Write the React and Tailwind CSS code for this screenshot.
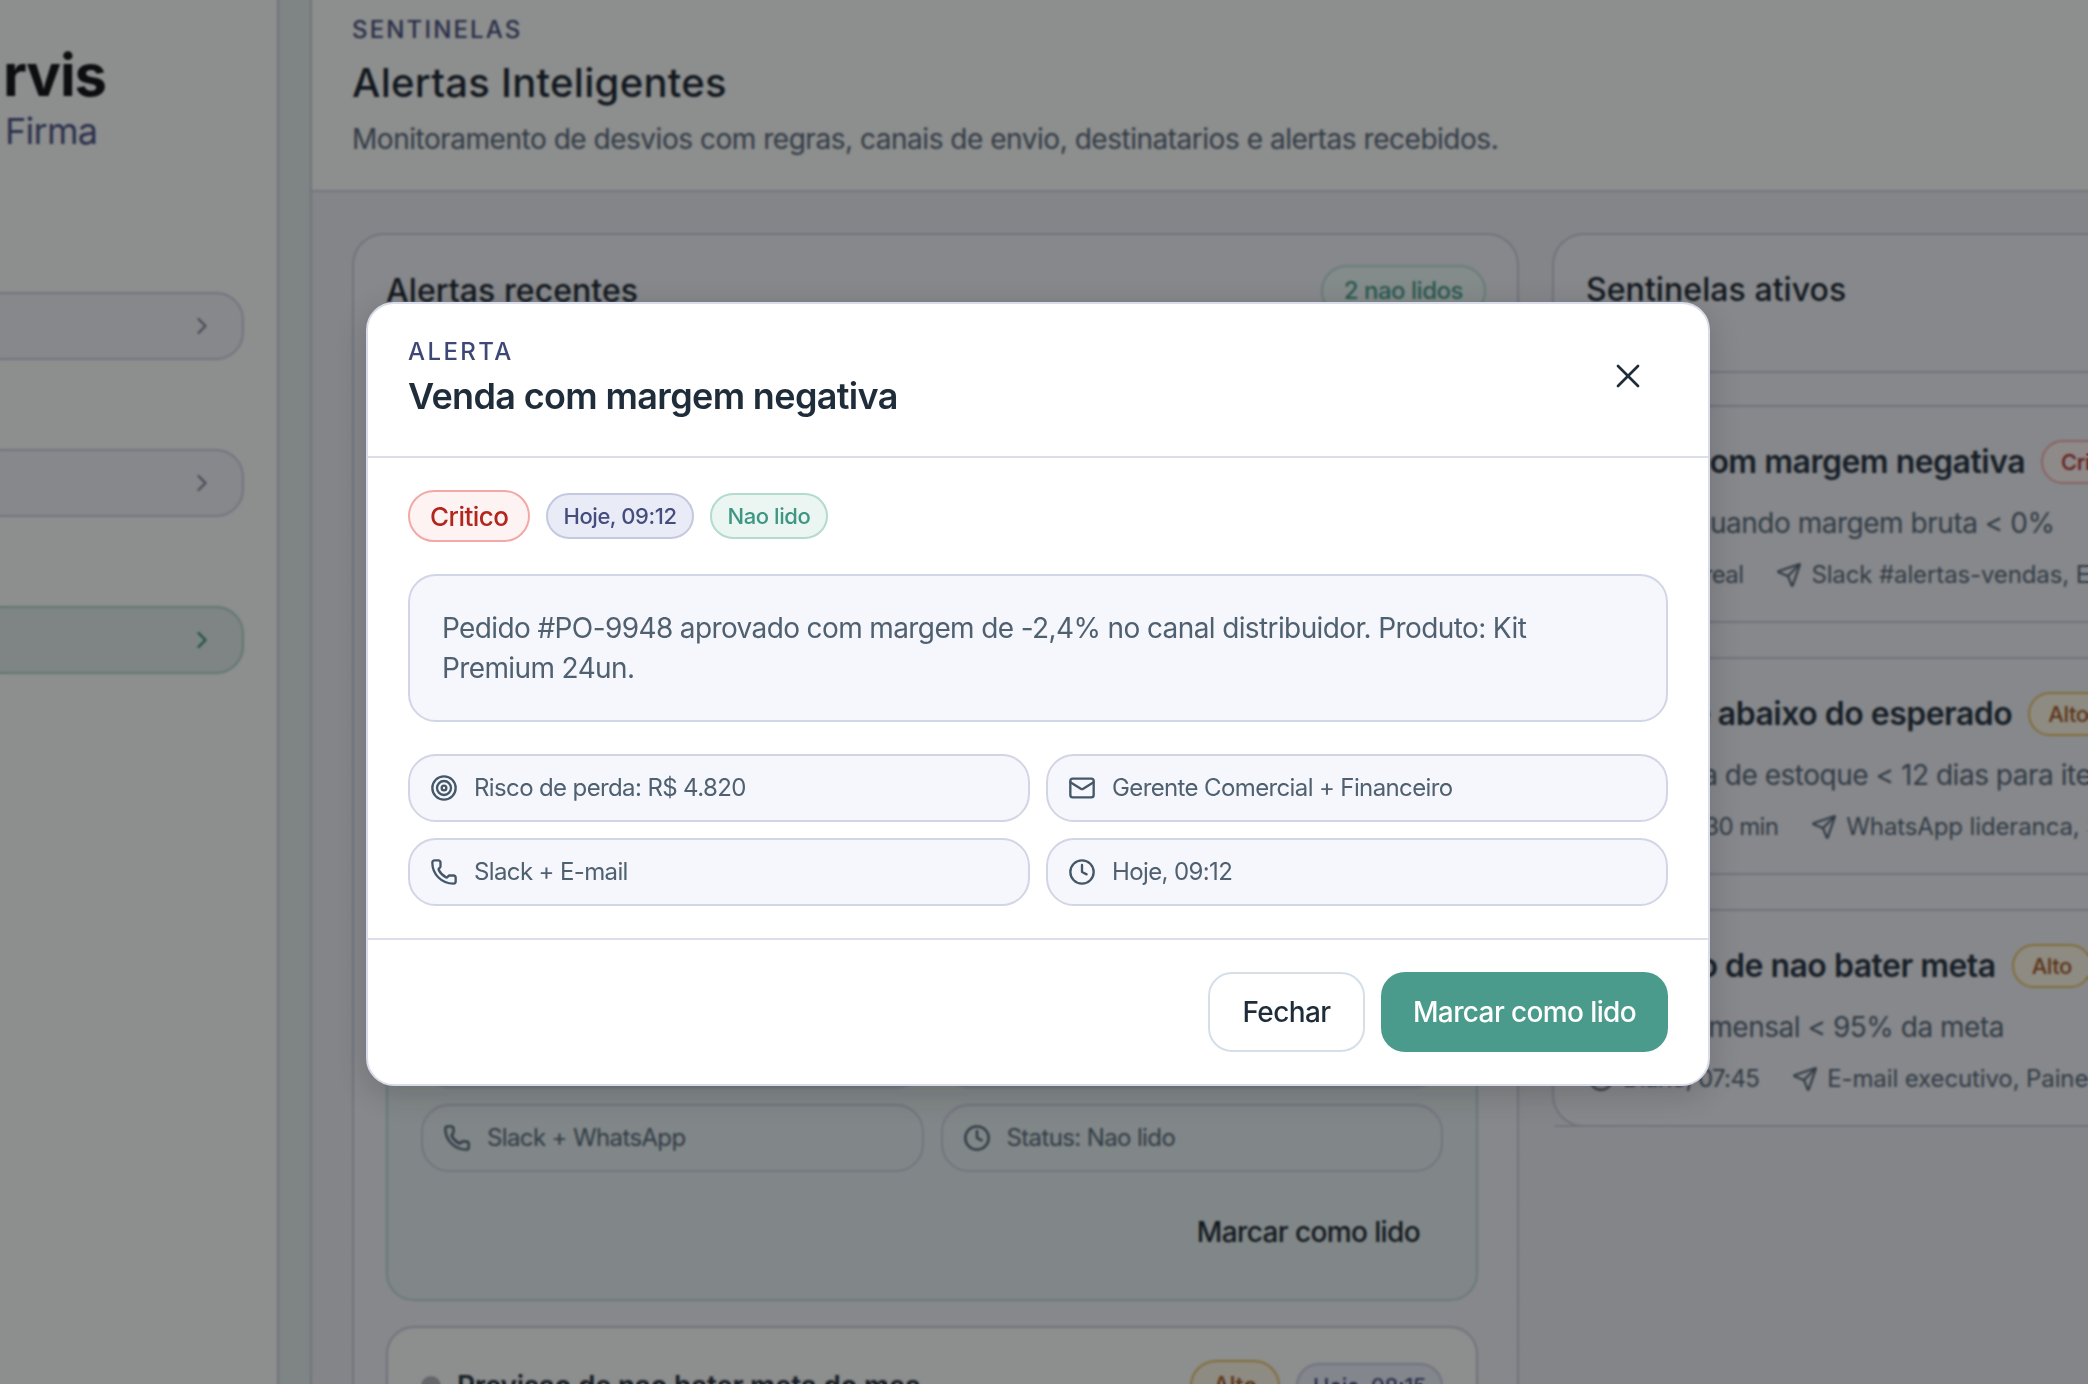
import React from "react";
import { ChevronRight, Target, Mail, Phone, Clock, Send, X } from "lucide-react";

function NavButton({ active }) {
  return (
    <div className={"-ml-[40px] flex h-[68px] w-[284px] items-center justify-end rounded-[28px] border-2 pr-[26px] " + (active ? "border-[#a9cfc2] bg-[#dfebe6] text-[#2a8a72]" : "border-[#c9ccdc] bg-[#eff0f4] text-[#7b8096]")}>
      <ChevronRight size={28} strokeWidth={2} />
    </div>
  );
}

function SoftPill({ icon: Icon, children }) {
  return (
    <div className="flex h-[68px] items-center gap-4 rounded-[28px] border-2 border-[#d2d5e6] bg-[#f6f7fc] px-5 text-[24px] tracking-[-0.026em] text-[#4f6070]">
      <Icon size={28} strokeWidth={2} className="shrink-0 text-[#45586a]" />
      <span className="whitespace-nowrap">{children}</span>
    </div>
  );
}

function Badge({ tone, children }) {
  const tones = {
    red: "h-[52px] border-[#f3a8a6] bg-[#fdf3f2] text-[#b3261e] px-[20px] text-[26px]",
    blue: "h-[46px] border-[#c5c9e0] bg-[#e9ecf7] text-[#444d7d] px-[15px] text-[22px]",
    green: "h-[46px] border-[#b3dbd0] bg-[#ebf6f3] text-[#3f9683] px-[16px] text-[22px]",
    amber: "h-[44px] border-[#e7bd5d] bg-[#fdf5e3] text-[#a0541a] px-[18px] text-[22px]",
    rule: "h-[44px] border-[#f3a8a6] bg-[#fdf3f2] text-[#b3261e] px-[18px] text-[22px]",
    amberLarge: "h-[52px] border-[#e7bd5d] bg-[#fdf5e3] text-[#a0541a] px-[21px] text-[24px]",
  };
  return <span className={"inline-flex shrink-0 items-center whitespace-nowrap rounded-full border-2 font-medium tracking-[-0.02em] " + tones[tone]}>{children}</span>;
}

function RuleItem({ title, badge, tone, condition, time, channel }) {
  return (
    <div className="h-[218px] border-y-2 border-[#c6c9d8] px-[34px] pt-[33px]">
      <div className="flex items-center gap-[16px]">
        <span className="whitespace-nowrap text-[32px] font-semibold leading-[44px] tracking-[-0.016em] text-[#1c2a36]">{title}</span>
        <Badge tone={tone}>{badge}</Badge>
      </div>
      <div className="mt-[19px] whitespace-nowrap text-[28px] leading-[40px] tracking-[-0.017em] text-[#4f6070]">{condition}</div>
      <div className="mt-[14px] flex items-center gap-[33px] whitespace-nowrap text-[24px] leading-[36px] tracking-[-0.005em] text-[#4f6070]">
        <span className="flex items-center gap-[9px] tracking-[-0.026em]"><Clock size={26} />{time}</span>
        <span className="flex items-center gap-[9px]"><Send size={26} />{channel}</span>
      </div>
    </div>
  );
}

export default function App() {
  return (
    <div className="relative flex h-[1384px] w-[2088px] overflow-hidden bg-[#e0e8e9] font-[Inter,'Liberation_Sans',sans-serif] text-[#1c2a36]">
      <aside className="w-[279px] shrink-0 overflow-hidden border-r-2 border-[#c8ccd6] bg-[#fbfbf9]">
        <div className="pl-[3px] pt-[45px] text-[58px] font-bold leading-[60px] tracking-[-0.02em] text-[#0a0a0a]">rvis</div>
        <div className="pl-[5px] pt-[4px] text-[36px] leading-[44px] tracking-[-0.02em] text-[#444d7d]">Firma</div>
        <div className="mt-[139px] flex flex-col gap-[89px]">
          <NavButton />
          <NavButton />
          <NavButton active />
        </div>
      </aside>
      <div className="w-[31px] shrink-0" />
      <main className="flex min-w-0 flex-1 flex-col border-l-2 border-[#c8ccd6] bg-[#e9ebef] bg-[linear-gradient(#e5e7ec_1px,transparent_1px),linear-gradient(90deg,#e5e7ec_1px,transparent_1px)] bg-[size:48px_48px]">
        <header className="h-[192px] shrink-0 border-b-2 border-[#cdd0da] bg-[#fbfbf9] pl-[40px] pt-[14px]">
          <div className="text-[24px] font-medium leading-[32px] tracking-[0.09em] text-[#3e4775]">SENTINELAS</div>
          <h1 className="mt-[15px] text-[40px] font-medium leading-[44px] tracking-[0.007em] text-[#141d28]">Alertas Inteligentes</h1>
          <p className="mt-[14px] whitespace-nowrap text-[28px] leading-[40px] tracking-[-0.017em] text-[#4f6070]">Monitoramento de desvios com regras, canais de envio, destinatarios e alertas recebidos.</p>
        </header>
        <div className="flex flex-1 items-start gap-[33px] pl-[40px] pt-[41px]">
          <section className="h-[1400px] w-[1167px] shrink-0 rounded-[32px] border-2 border-[#c6c9d8] bg-[#eff0f4] pl-[32px] pr-[39px] pt-[30px]">
            <div className="-mr-[8px] flex h-[52px] items-center justify-between">
              <h2 className="text-[32px] font-medium leading-[44px] tracking-[0.002em] text-[#141d28]">Alertas recentes</h2>
              <span className="inline-flex h-[52px] items-center rounded-full border-2 border-[#b3dbd0] bg-[#ebf6f3] px-[21px] text-[24px] font-medium tracking-[-0.02em] text-[#3f9683]">2 nao lidos</span>
            </div>
            <div className="mt-[23px] flex h-[961px] flex-col justify-end rounded-[28px] border-2 border-[#b9d4cd] bg-[#e5eeee] px-[33px] pb-[27px]">
              <div className="grid grid-cols-2 gap-x-[17px] gap-y-[16px]">
                <div className="h-[68px] rounded-[28px] border-2 border-[#c8cbdc]" />
                <div className="h-[68px] rounded-[28px] border-2 border-[#c8cbdc]" />
                <div className="flex h-[68px] items-center gap-4 rounded-[28px] border-2 border-[#c8cbdc] px-5 text-[24px] tracking-[-0.026em] text-[#4f6070]">
                  <Phone size={28} className="text-[#45586a]" />Slack + WhatsApp
                </div>
                <div className="flex h-[68px] items-center gap-4 rounded-[28px] border-2 border-[#c8cbdc] px-5 text-[24px] tracking-[-0.026em] text-[#4f6070]">
                  <Clock size={28} className="text-[#45586a]" />Status: Nao lido
                </div>
              </div>
              <div className="mt-[20px] flex h-[80px] items-center justify-end pr-[23px] text-[28px] font-medium tracking-[-0.022em] text-[#141d28]">Marcar como lido</div>
            </div>
            <div className="mt-[25px] h-[300px] rounded-[28px] border-2 border-[#c6c9d8] bg-[#fbfbf9] px-[33px] pt-[32px]">
              <div className="flex items-center gap-[16px]">
                <span className="h-5 w-5 shrink-0 rounded-full bg-[#aeb2b6]" />
                <span className="flex-1 whitespace-nowrap text-[28px] font-semibold leading-[44px] tracking-[-0.012em]">Previsao de nao bater meta do mes</span>
                <Badge tone="amberLarge">Alto</Badge>
                <Badge tone="blue">Hoje, 08:15</Badge>
              </div>
            </div>
          </section>
          <section className="h-[894px] w-[800px] shrink-0 rounded-[32px] border-2 border-[#c6c9d8] bg-[#eff0f4]">
            <div className="h-[136px] px-[32px] pt-[33px]">
              <h2 className="text-[32px] font-medium leading-[44px] tracking-[0.002em] text-[#141d28]">Sentinelas ativos</h2>
              <div className="-mx-[32px] mt-[59px] h-[2px] bg-[#c6c9d8]" />
            </div>
            <div className="flex flex-col gap-[34px] pt-[34px]">
              <RuleItem title="Venda com margem negativa" badge="Critico" tone="rule" condition="Dispara quando margem bruta < 0%" time="Tempo real" channel="Slack #alertas-vendas, E-mail financeiro" />
              <RuleItem title="Estoque abaixo do esperado" badge="Alto" tone="amber" condition="Cobertura de estoque < 12 dias para itens A" time="A cada 30 min" channel="WhatsApp lideranca, Slack #supply" />
              <RuleItem title="Previsao de nao bater meta" badge="Alto" tone="amber" condition="Projecao mensal < 95% da meta" time="Diario, 07:45" channel="E-mail executivo, Painel" />
            </div>
          </section>
        </div>
      </main>

      <div className="absolute inset-0 flex items-center justify-center bg-[rgba(18,20,22,0.47)] pr-3 pt-[4px] backdrop-blur-[1px]">
        <div className="w-[1344px] overflow-hidden rounded-[28px] border-2 border-[#d8dbe9] bg-white shadow-[0_8px_30px_rgba(0,0,0,0.18)]">
          <div className="flex items-start justify-between border-b-2 border-[#dcdfea] px-10 pb-[38px] pt-8">
            <div>
              <div className="text-[24px] font-medium leading-[32px] tracking-[0.1em] text-[#3e4775]">ALERTA</div>
              <h3 className="mt-[6px] text-[36px] font-semibold leading-[44px] tracking-[-0.018em] text-[#1f2d3a]">Venda com margem negativa</h3>
            </div>
            <button className="flex h-20 w-20 items-center justify-center text-[#1f2d3a]"><X size={40} strokeWidth={1.6} /></button>
          </div>
          <div className="flex flex-col gap-8 px-10 py-8">
            <div className="flex items-center gap-4">
              <Badge tone="red">Critico</Badge>
              <Badge tone="blue">Hoje, 09:12</Badge>
              <Badge tone="green">Nao lido</Badge>
            </div>
            <div className="rounded-[28px] border-2 border-[#d2d5e6] bg-[#f6f7fc] p-8 text-[28px] leading-[40px] tracking-[-0.022em] text-[#4f6070]">
              Pedido #PO-9948 aprovado com margem de -2,4% no canal distribuidor. Produto: Kit Premium 24un.
            </div>
            <div className="grid grid-cols-2 gap-4">
              <SoftPill icon={Target}>Risco de perda: R$ 4.820</SoftPill>
              <SoftPill icon={Mail}>Gerente Comercial + Financeiro</SoftPill>
              <SoftPill icon={Phone}>Slack + E-mail</SoftPill>
              <SoftPill icon={Clock}>Hoje, 09:12</SoftPill>
            </div>
          </div>
          <div className="flex justify-end gap-4 border-t-2 border-[#dcdfea] px-10 py-8">
            <button className="h-20 w-[157px] rounded-[24px] border-2 border-[#d5dfe8] bg-white text-[28px] font-medium tracking-[-0.022em] text-[#1f2d3a]">Fechar</button>
            <button className="h-20 w-[287px] rounded-[24px] bg-[#4b9b8c] text-[28px] font-medium tracking-[-0.022em] text-white">Marcar como lido</button>
          </div>
        </div>
      </div>
    </div>
  );
}
